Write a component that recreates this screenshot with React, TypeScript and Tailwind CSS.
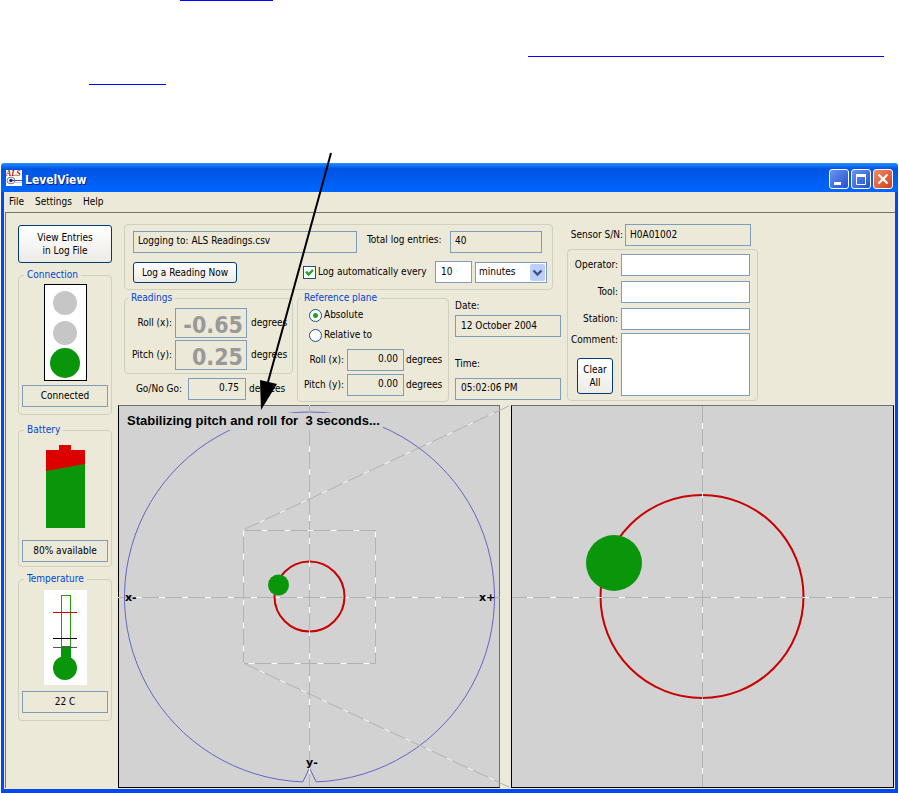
import React from 'react';

interface GroupProps {
  title: string;
  className?: string;
  children: React.ReactNode;
}

const Group: React.FC<GroupProps> = ({ title, className = '', children }) => (
  <fieldset className={`min-w-0 rounded-[4px] border border-[#d0d0bf] ${className}`}>
    <legend className="ml-[3px] px-[3px] leading-[14px] text-[#0046d5]">{title}</legend>
    {children}
  </fieldset>
);

interface ReadoutProps {
  label: string;
  value: string;
  className?: string;
}

const Readout: React.FC<ReadoutProps> = ({ label, value, className = '' }) => (
  <input
    readOnly
    aria-label={label}
    value={value}
    className={`block shrink-0 border border-[#7f9db9] bg-[#ece9d8] outline-none ${className}`}
  />
);

const XpButton: React.FC<{ className?: string; children: React.ReactNode }> = ({ className = '', children }) => (
  <button
    type="button"
    className={`shrink-0 rounded-[3px] border border-[#003c74] bg-linear-to-b from-white to-[#ecebe6] leading-[13px] ${className}`}
  >
    {children}
  </button>
);

// Grey guide line with white dashes on top of it
const Guide: React.FC<{ d: string; offset?: number }> = ({ d, offset = -18 }) => (
  <g fill="none">
    <path d={d} stroke="#b2b2b2" />
    <path d={d} stroke="#ffffff" strokeDasharray="6 17" strokeDashoffset={offset} />
  </g>
);

const AppLogo: React.FC = () => (
  <svg viewBox="0 0 16 16" className="h-4 w-4 shrink-0" aria-hidden="true">
    <rect width="16" height="16" fill="#fff" />
    <text x="0" y="6" fontSize="8" fontWeight="bold" fontStyle="italic" fontFamily="Liberation Serif, serif" fill="#b01020">
      ALS
    </text>
    <ellipse cx="5" cy="10.5" rx="4" ry="3.3" fill="#fff" stroke="#777" />
    <circle cx="5" cy="10.5" r="1.8" fill="#1c1c90" />
    <path d="M6 10.5H16" stroke="#4a4aa8" />
    <path d="M9 12.5H16" stroke="#ccc" />
  </svg>
);

const TitleBar: React.FC = () => (
  <header className="flex h-[29px] items-center rounded-t-[3px] bg-linear-to-b from-[#2a8cff] via-[#0054e3] via-20% to-[#0066ff] pr-[5px] pl-[5px]">
    <AppLogo />
    <h1 className="ml-[3px] flex-1 pt-1 text-[12px] leading-4 font-bold text-white [text-shadow:1px_1px_#0a1883]">
      LevelView
    </h1>
    <div className="flex gap-[2px] pt-[2px]">
      <button type="button" aria-label="Minimize" className="h-5 w-5 rounded-[3px] border border-white bg-linear-to-br from-[#6d93f0] to-[#1f4fd0]">
        <svg viewBox="0 0 18 18" className="block">
          <path d="M4 13.5h7" stroke="#fff" strokeWidth="3" />
        </svg>
      </button>
      <button type="button" aria-label="Maximize" className="h-5 w-5 rounded-[3px] border border-white bg-linear-to-br from-[#6d93f0] to-[#1f4fd0]">
        <svg viewBox="0 0 18 18" className="block">
          <path d="M4.5 4v10.5h9V4" fill="none" stroke="#fff" />
          <path d="M4 5.5h10" stroke="#fff" strokeWidth="3" />
        </svg>
      </button>
      <button type="button" aria-label="Close" className="h-5 w-5 rounded-[3px] border border-white bg-linear-to-br from-[#f08a6c] to-[#d23a10]">
        <svg viewBox="0 0 18 18" className="block">
          <path d="M4.5 4.5l9 9M13.5 4.5l-9 9" stroke="#fff" strokeWidth="2.2" />
        </svg>
      </button>
    </div>
  </header>
);

const Sidebar: React.FC = () => (
  <aside className="flex w-[94px] shrink-0 flex-col pt-px">
    <XpButton className="h-[38px]">
      View Entries
      <br />
      in Log File
    </XpButton>

    <Group title="Connection" className="mt-[5px] h-[147px] px-[2px]">
      <svg viewBox="0 0 43 97" className="mx-auto mt-[2px] block h-[97px] w-[43px]" aria-hidden="true">
        <rect x="0.5" y="0.5" width="42" height="96" fill="#fff" stroke="#000" />
        <circle cx="21" cy="19" r="12" fill="#c6c6c6" />
        <circle cx="21" cy="49" r="12" fill="#c6c6c6" />
        <circle cx="21" cy="79" r="15" fill="#0a960a" />
      </svg>
      <Readout label="Connection" value="Connected" className="mx-auto mt-1 h-[22px] w-[86px] pb-[2px] text-center" />
    </Group>

    <Group title="Battery" className="mt-2 h-[144px] px-[2px]">
      <svg viewBox="0 0 40 84" className="mx-auto mt-2 block h-[84px] w-10" aria-hidden="true">
        <path d="M14 0h12v5h14v22H1V5h13z" fill="#dc0000" />
        <path d="M1 26L40 19V83H1z" fill="#0a960a" />
      </svg>
      <Readout label="Battery" value="80% available" className="mx-auto mt-[11px] h-[22px] w-[86px] pb-[2px] text-center" />
    </Group>

    <Group title="Temperature" className="mt-[5px] h-[149px] px-[2px]">
      <svg viewBox="0 0 43 95" className="mx-auto mt-1 block h-[95px] w-[43px]" aria-hidden="true">
        <rect width="43" height="95" fill="#fff" />
        <rect x="17.5" y="5.5" width="9" height="60" fill="#fff" stroke="#2c9a10" />
        <path d="M17 56h10v14H17z" fill="#0a960a" />
        <circle cx="21" cy="78" r="12" fill="#0a960a" />
        <path d="M9 22.5h24" stroke="#d00000" />
        <path d="M9 48.5h24" stroke="#000" />
        <path d="M9 57.5h24" stroke="#555" />
      </svg>
      <Readout label="Temperature" value="22 C" className="mx-auto mt-[6px] h-[22px] w-[86px] pb-[2px] text-center" />
    </Group>
  </aside>
);

const LogPanel: React.FC = () => (
  <section className="flex h-[66px] w-[429px] flex-col gap-2 rounded-[4px] border border-[#d0d0bf] pt-[6px] pl-2">
    <div className="flex">
      <Readout label="Log file" value="Logging to: ALS Readings.csv" className="h-[22px] w-[224px] px-1 pb-1" />
      <label className="ml-[10px] flex">
        <span className="w-[83px] pt-[2px]">Total log entries:</span>
        <Readout label="Total log entries" value="40" className="h-[22px] w-[92px] px-1 pb-1" />
      </label>
    </div>
    <div className="flex items-center">
      <XpButton className="h-[21px] w-[104px]">Log a Reading Now</XpButton>
      <label className="ml-[66px] flex w-[132px] items-center gap-[2px] whitespace-nowrap">
        <span className="relative block h-[13px] w-[13px] shrink-0">
          <input type="checkbox" defaultChecked className="peer block h-[13px] w-[13px] appearance-none border border-[#1c5180] bg-white" />
          <svg viewBox="0 0 13 13" className="pointer-events-none absolute inset-0 hidden peer-checked:block" aria-hidden="true">
            <path d="M3 5.5L5.5 8.5L10 4" fill="none" stroke="#21a121" strokeWidth="2.4" />
          </svg>
        </span>
        Log automatically every
      </label>
      <input aria-label="Interval" defaultValue="10" className="block h-[22px] w-[37px] border border-[#7f9db9] bg-white px-[5px] pb-[2px] outline-none" />
      <span className="relative ml-[3px] block">
        <select aria-label="Interval unit" className="block h-[21px] w-[72px] appearance-none border border-[#7f9db9] bg-white pl-[3px] outline-none">
          <option>minutes</option>
          <option>hours</option>
        </select>
        <svg viewBox="0 0 15 17" className="pointer-events-none absolute top-[2px] right-[2px] h-[17px] w-[15px]" aria-hidden="true">
          <rect width="15" height="17" rx="2" fill="#bccffb" />
          <path d="M3.5 6.5l4 4l4-4" fill="none" stroke="#3f5378" strokeWidth="2.4" />
        </svg>
      </span>
    </div>
  </section>
);

const Readings: React.FC = () => {
  const rows = [
    { label: 'Roll (x):', value: '-0.65' },
    { label: 'Pitch (y):', value: '0.25' },
  ];

  return (
    <div className="w-[169px] shrink-0">
      <Group title="Readings" className="h-[83px]">
        <div className="flex flex-col gap-[2px] pt-[3px]">
          {rows.map((row) => (
            <label key={row.label} className="flex items-center">
              <span className="w-[50px] pr-[3px] text-right whitespace-nowrap">{row.label}</span>
              <Readout label={row.label} value={row.value} className="h-[30px] w-[72px] pt-[3px] pr-[3px] text-right text-[23px] font-bold text-[#999]" />
              <span className="ml-1">degrees</span>
            </label>
          ))}
        </div>
      </Group>
      <label className="mt-1 flex items-center">
        <span className="w-[64px] pr-[6px] text-right whitespace-nowrap">Go/No Go:</span>
        <Readout label="Go/No Go" value="0.75" className="h-[22px] w-[58px] pr-[6px] pb-1 text-right" />
        <span className="ml-[3px]">degrees</span>
      </label>
    </div>
  );
};

const ReferencePlane: React.FC = () => (
  <Group title="Reference plane" className="ml-1 h-[111px] w-[152px] shrink-0">
    <div className="flex flex-col gap-[6px] pt-[3px] pl-[11px]">
      {['Absolute', 'Relative to'].map((name, i) => (
        <label key={name} className="flex items-center gap-[2px]">
          <input
            type="radio"
            name="plane"
            defaultChecked={i === 0}
            className="block h-[13px] w-[13px] appearance-none rounded-full border border-[#1c5180] bg-white checked:bg-[radial-gradient(circle,#21a121_0_2px,white_3px)]"
          />
          {name}
        </label>
      ))}
    </div>
    <div className="mt-[7px] flex flex-col gap-[3px]">
      {['Roll (x):', 'Pitch (y):'].map((name) => (
        <label key={name} className="flex items-center">
          <span className="w-[49px] pr-[3px] text-right whitespace-nowrap">{name}</span>
          <Readout label={`Reference ${name}`} value="0.00" className="h-[22px] w-[57px] pr-[5px] pb-1 text-right" />
          <span className="ml-[2px]">degrees</span>
        </label>
      ))}
    </div>
  </Group>
);

const Clock: React.FC = () => (
  <div className="ml-[6px] flex w-[106px] shrink-0 flex-col justify-between pt-[8px] pb-[2px]">
    <label>
      Date:
      <Readout label="Date" value="12 October 2004" className="mt-[2px] h-[22px] w-[106px] px-[5px] pb-[2px]" />
    </label>
    <label>
      Time:
      <Readout label="Time" value="05:02:06 PM" className="mt-[7px] h-[22px] w-[106px] px-[5px] pb-1" />
    </label>
  </div>
);

const SensorPanel: React.FC = () => (
  <section className="ml-[6px] w-[191px] shrink-0">
    <label className="flex items-center">
      <span className="w-[58px] pr-[2px] text-right whitespace-nowrap">Sensor S/N:</span>
      <Readout label="Sensor S/N" value="H0A01002" className="h-[22px] w-[126px] px-1 pb-[2px]" />
    </label>
    <div className="mt-[3px] flex h-[152px] flex-col gap-[5px] rounded-[4px] border border-[#d0d0bf] pt-1 pl-[2px]">
      {['Operator', 'Tool', 'Station'].map((name) => (
        <label key={name} className="flex items-center">
          <span className="w-[51px] pr-[3px] text-right">{name}:</span>
          <input className="block h-[22px] w-[129px] border border-[#7f9db9] bg-white px-1 outline-none" />
        </label>
      ))}
      <div className="-mt-[2px] flex">
        <div className="flex w-[51px] flex-col">
          <label htmlFor="comment" className="pr-[3px] text-right whitespace-nowrap">
            Comment:
          </label>
          <XpButton className="mt-[11px] ml-[7px] h-[36px] w-[36px]">
            Clear
            <br />
            All
          </XpButton>
        </div>
        <textarea id="comment" className="block h-[63px] w-[129px] resize-none border border-[#7f9db9] bg-white outline-none" />
      </div>
    </div>
  </section>
);

const OverviewPlot: React.FC = () => (
  <div className="border border-[#707070] border-b-black border-l-black bg-[#d2d2d2]">
    <svg viewBox="1 1 380 381" className="relative block w-full overflow-visible" fontFamily="DejaVu Sans, sans-serif">
      <Guide d="M0 192.5H382" />
      <path d="M198.2 376.9A185 185 0 1 0 184.8 376.9L191.5 363L198.2 376.9" fill="none" stroke="#6464c8" />
      <circle cx="191.5" cy="191.5" r="35" fill="none" stroke="#c80000" strokeWidth="2" />
      <Guide d="M191.5 0V382" />
      <Guide d="M125.5 125.5H257.5V258.5H125.5Z" />
      <Guide d="M125 125L393 0" />
      <Guide d="M125 258L393 383" />
      <circle cx="160.5" cy="180" r="10.5" fill="#0a960a" />
      <rect x="7" y="8" width="258" height="17" fill="#d2d2d2" />
      <text x="9" y="20" fontSize="13" fontWeight="bold" fontFamily="Liberation Sans, sans-serif" xmlSpace="preserve">
        {'Stabilizing pitch and roll for\u00a0 3 seconds...'}
      </text>
      <g fontSize="11" fontWeight="bold">
        <text x="7" y="196">x-</text>
        <text x="361" y="196">x+</text>
        <text x="188" y="361">y-</text>
      </g>
    </svg>
  </div>
);

const ZoomPlot: React.FC = () => (
  <div className="border border-black border-t-[#707070] bg-[#d2d2d2]">
    <svg viewBox="1 1 381 381" className="block w-full">
      <circle cx="191" cy="191.5" r="101.5" fill="none" stroke="#c80000" strokeWidth="2" />
      <Guide d="M0 192.5H383" offset={-16} />
      <Guide d="M191.5 0V382" />
      <circle cx="103" cy="158" r="28" fill="#0a960a" />
    </svg>
  </div>
);

// Underlines of the manual's links above the window
const ManualLinks: React.FC = () => (
  <nav className="h-[163px]">
    <a href="#top" aria-label="Top" className="ml-[180px] block h-px w-[93px] bg-[#0000ff]" />
    <a href="#levels" aria-label="Levels" className="mt-[55px] mr-[15px] ml-auto block h-px w-[356px] bg-[#0000ff]" />
    <a href="#log" aria-label="Log" className="mt-[27px] ml-[89px] block h-px w-[77px] bg-[#0000ff]" />
  </nav>
);

export default function App() {
  return (
    <div className="relative bg-white font-['DejaVu_Sans_Condensed','DejaVu_Sans',sans-serif] text-[10px] leading-[14px] text-black">
      <ManualLinks />

      <main className="mr-px ml-px">
        <TitleBar />
        <div className="border-x-[3px] border-b-4 border-[#0048f1] bg-[#ece9d8] pb-px">
          <nav className="flex h-5 items-center gap-[11px] pl-[5px]">
            <a href="#file">File</a>
            <a href="#settings">Settings</a>
            <a href="#help">Help</a>
          </nav>
          <div className="ml-px flex border-t border-l border-[#77746a] pt-[11px] pr-px pl-3">
            <Sidebar />
            <div className="ml-[6px] min-w-0 flex-1">
              <div className="flex pl-[6px]">
                <div>
                  <LogPanel />
                  <div className="mt-px flex">
                    <Readings />
                    <ReferencePlane />
                    <Clock />
                  </div>
                </div>
                <SensorPanel />
              </div>
              <div className="mt-[3px] grid grid-cols-[382fr_383fr] gap-[11px]">
                <OverviewPlot />
                <ZoomPlot />
              </div>
            </div>
          </div>
        </div>
      </main>

      <svg viewBox="0 0 80 260" className="pointer-events-none absolute top-[152px] left-[255px] h-[260px] w-[80px]" aria-hidden="true">
        <path d="M76 1L13 230" stroke="#000" strokeWidth="2" />
        <path d="M5 228L22 232L6 258Z" fill="#000" />
      </svg>
    </div>
  );
}
